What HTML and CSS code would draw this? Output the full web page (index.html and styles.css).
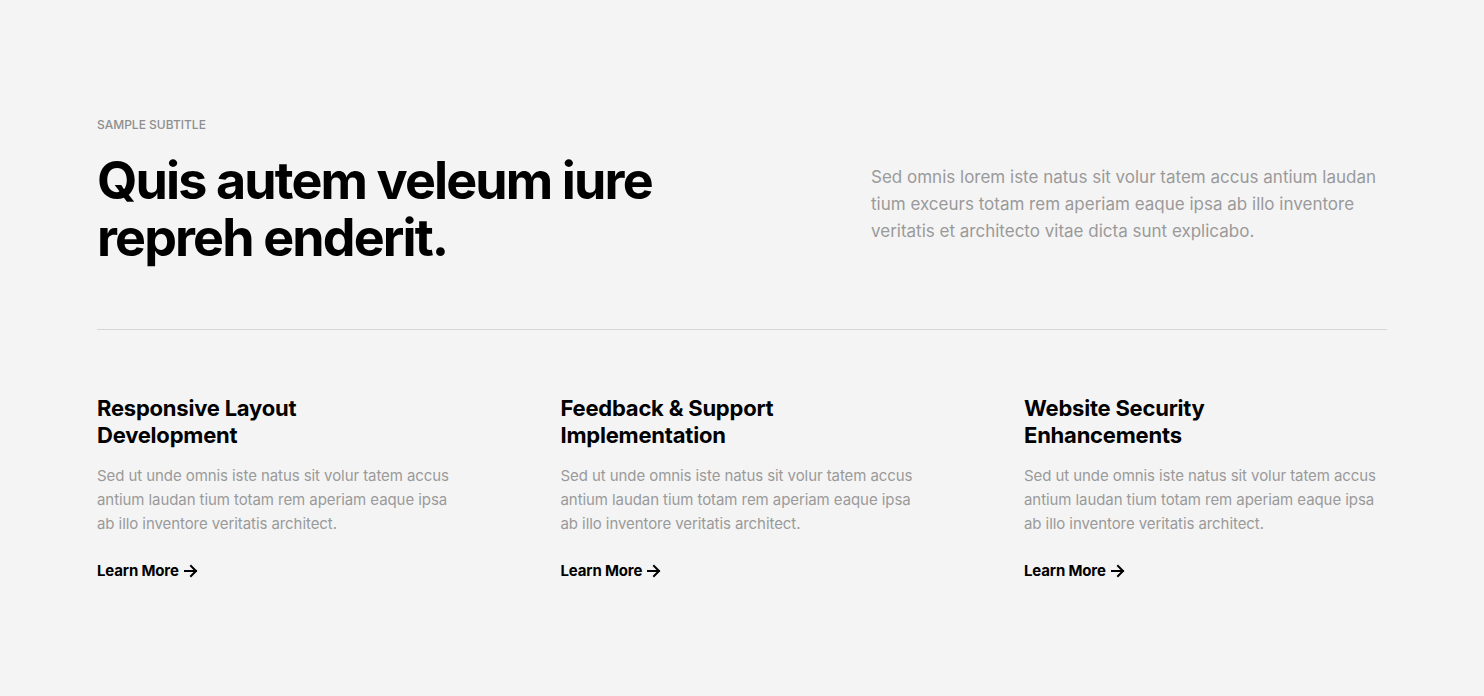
FILE: index.html
```html
<!DOCTYPE html>
<html lang="en">
<head>
<meta charset="utf-8">
<title>Services</title>
<link rel="stylesheet" href="styles.css">
</head>
<body>
<section class="section">
  <div class="container">
    <div class="intro">
      <div class="intro-left">
        <p class="subtitle">Sample Subtitle</p>
        <h2 class="headline">Quis autem veleum iure<br>repreh enderit.</h2>
      </div>
      <div class="intro-right">
        <p class="lead">Sed omnis lorem iste natus sit volur tatem accus antium laudan tium exceurs totam rem aperiam eaque ipsa ab illo inventore veritatis et architecto vitae dicta sunt explicabo.</p>
      </div>
    </div>
    <hr class="divider">
    <div class="features">
      <div class="feature">
        <h3 class="feature-title">Responsive Layout<br>Development</h3>
        <p class="feature-text">Sed ut unde omnis iste natus sit volur tatem accus antium laudan tium totam rem aperiam eaque ipsa ab illo inventore veritatis architect.</p>
        <a class="more" href="#">Learn More <svg class="arrow" viewBox="0 0 14 14" width="14" height="14"><path d="M1 7h11M7 2l5 5-5 5" fill="none" stroke="currentColor" stroke-width="2" stroke-linecap="square"/></svg></a>
      </div>
      <div class="feature">
        <h3 class="feature-title">Feedback &amp; Support<br>Implementation</h3>
        <p class="feature-text">Sed ut unde omnis iste natus sit volur tatem accus antium laudan tium totam rem aperiam eaque ipsa ab illo inventore veritatis architect.</p>
        <a class="more" href="#">Learn More <svg class="arrow" viewBox="0 0 14 14" width="14" height="14"><path d="M1 7h11M7 2l5 5-5 5" fill="none" stroke="currentColor" stroke-width="2" stroke-linecap="square"/></svg></a>
      </div>
      <div class="feature">
        <h3 class="feature-title">Website Security<br>Enhancements</h3>
        <p class="feature-text">Sed ut unde omnis iste natus sit volur tatem accus antium laudan tium totam rem aperiam eaque ipsa ab illo inventore veritatis architect.</p>
        <a class="more" href="#">Learn More <svg class="arrow" viewBox="0 0 14 14" width="14" height="14"><path d="M1 7h11M7 2l5 5-5 5" fill="none" stroke="currentColor" stroke-width="2" stroke-linecap="square"/></svg></a>
      </div>
    </div>
  </div>
</section>
</body>
</html>
```

FILE: styles.css
```css
* { box-sizing: border-box; }
html, body { margin: 0; padding: 0; }
body {
  background: #f4f4f4;
  font-family: Inter, "Noto Sans", sans-serif;
  color: #000;
  -webkit-font-smoothing: antialiased;
}
.section { padding: 117px 0 100px; }
.container { width: 1290px; margin: 0 auto; }
.intro { display: flex; justify-content: space-between; }
.intro-left { width: 640px; }
.intro-right { width: 516px; padding-top: 47px; }
.subtitle {
  margin: 0 0 19px;
  font-size: 12px;
  line-height: 16px;
  text-transform: uppercase;
  color: #8e8e8e;
  font-weight: 500;
}
.headline {
  margin: 0;
  font-size: 52px;
  line-height: 57px;
  font-weight: 700;
  letter-spacing: -0.036em;
}
.lead {
  margin: 0;
  font-size: 17px;
  line-height: 27px;
  color: #9a9a9a;
}
.divider {
  border: 0;
  border-top: 1px solid #d6d6d6;
  margin: 63px 0 65px;
}
.features { display: grid; grid-template-columns: repeat(3, 363px); column-gap: 100.5px; }
.feature-title {
  margin: 0 0 15px;
  font-size: 22px;
  line-height: 27px;
  font-weight: 700;
  letter-spacing: -0.01em;
}
.feature-text {
  margin: 0 0 24px;
  font-size: 15px;
  line-height: 24px;
  color: #9a9a9a;
  letter-spacing: -0.005em;
}
.more {
  display: inline-flex;
  align-items: center;
  gap: 5px;
  font-size: 15px;
  font-weight: 700;
  color: #000;
  text-decoration: none;
  letter-spacing: -0.01em;
}
.arrow { display: block; }
```
